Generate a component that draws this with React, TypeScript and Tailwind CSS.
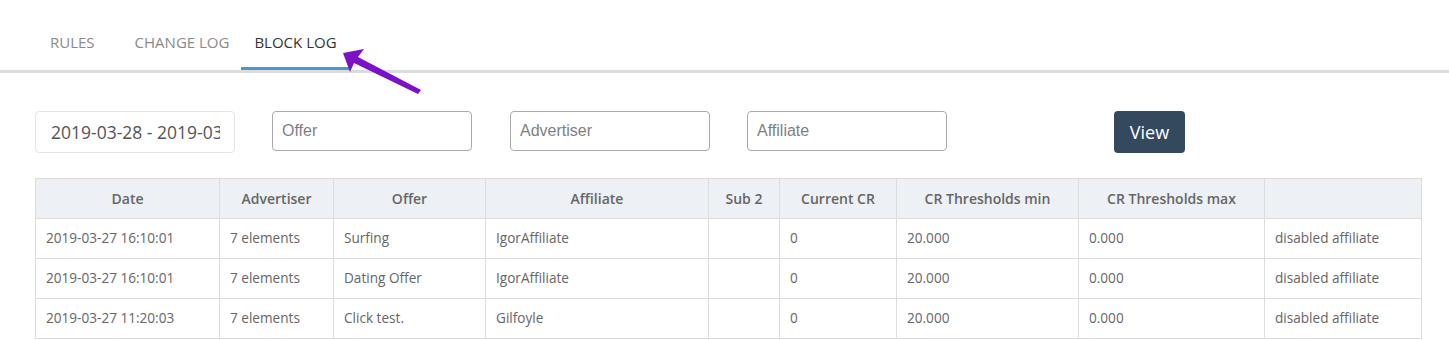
const rows = [
  { date: "2019-03-27 16:10:01", adv: "7 elements", offer: "Surfing", aff: "IgorAffiliate" },
  { date: "2019-03-27 16:10:01", adv: "7 elements", offer: "Dating Offer", aff: "IgorAffiliate" },
  { date: "2019-03-27 11:20:03", adv: "7 elements", offer: "Click test.", aff: "Gilfoyle" },
]

const cols = [
  { label: "Date", w: "w-[184px]" },
  { label: "Advertiser", w: "w-[114px]" },
  { label: "Offer", w: "w-[152px]" },
  { label: "Affiliate", w: "w-[223px]" },
  { label: "Sub 2", w: "w-[71px]" },
  { label: "Current CR", w: "w-[117px]" },
  { label: "CR Thresholds min", w: "w-[182px]" },
  { label: "CR Thresholds max", w: "w-[186px]" },
  { label: "", w: "w-[157px]" },
]

const inputCls =
  "w-[200px] h-[40px] border border-[#aaaaaa] rounded-[4px] px-[9px] text-[16px] text-[#555] placeholder:text-[#808080] font-['Liberation_Sans',sans-serif] outline-none"

export default function App() {
  return (
    <div className="relative w-[1449px] h-[340px] overflow-hidden bg-white font-['Open_Sans',sans-serif]">
      {/* Tabs */}
      <div className="flex pt-[32px] border-b-[3px] border-[#dcdcdc]">
        <div className="ml-[50px] h-[38px] text-[15px] text-[#8a8a8a] leading-[20px]">RULES</div>
        <div className="ml-[40px] h-[38px] text-[15px] text-[#8a8a8a] leading-[20px]">CHANGE LOG</div>
        <div className="ml-[12px] pl-[13px] w-[108px] h-[38px] -mb-[3px] border-b-[3px] border-[#4a98d0] text-[15px] text-[#333] leading-[20px] whitespace-nowrap">
          BLOCK LOG
        </div>
      </div>

      {/* Arrow */}
      <svg className="absolute left-0 top-0" width="1449" height="340">
        <polygon
          points="343,53 364,49 358,57 421,90 418,94 354,63 350,72"
          fill="#7b12c8"
        />
      </svg>

      {/* Filters */}
      <div className="flex items-start mt-[38px] px-[35px]">
        <div className="w-[200px] h-[42px] border border-[#e4e4e4] rounded-[4px] flex items-center pl-[15px] pr-[14px]">
          <div className="overflow-hidden whitespace-nowrap text-[17.5px] text-[#555]">2019-03-28 - 2019-03-28</div>
        </div>
        <input placeholder="Offer" className={`ml-[37px] ${inputCls}`} />
        <input placeholder="Advertiser" className={`ml-[38px] ${inputCls}`} />
        <input placeholder="Affiliate" className={`ml-[37px] ${inputCls}`} />
        <button className="ml-[167px] w-[71px] h-[42px] bg-[#34495e] rounded-[4px] text-white text-[18px] font-medium">
          View
        </button>
      </div>

      {/* Table */}
      <table className="ml-[35px] mt-[25px] border-collapse text-[13.6px] text-[#666]">
        <thead>
          <tr className="bg-[#edf0f5] h-[40px]">
            {cols.map((c, i) => (
              <th key={i} className={`${c.w} border border-[#dcdcdc] text-[14px] font-semibold text-[#666] text-center px-[10px]`}>
                {c.label}
              </th>
            ))}
          </tr>
        </thead>
        <tbody>
          {rows.map((r, i) => (
            <tr key={i} className="h-[40px]">
              <td className="border border-[#dcdcdc] px-[10px]">{r.date}</td>
              <td className="border border-[#dcdcdc] px-[10px]">{r.adv}</td>
              <td className="border border-[#dcdcdc] px-[10px]">{r.offer}</td>
              <td className="border border-[#dcdcdc] px-[10px]">{r.aff}</td>
              <td className="border border-[#dcdcdc] px-[10px]"></td>
              <td className="border border-[#dcdcdc] px-[10px]">0</td>
              <td className="border border-[#dcdcdc] px-[10px]">20.000</td>
              <td className="border border-[#dcdcdc] px-[10px]">0.000</td>
              <td className="border border-[#dcdcdc] px-[10px]">disabled affiliate</td>
            </tr>
          ))}
        </tbody>
      </table>
    </div>
  )
}
